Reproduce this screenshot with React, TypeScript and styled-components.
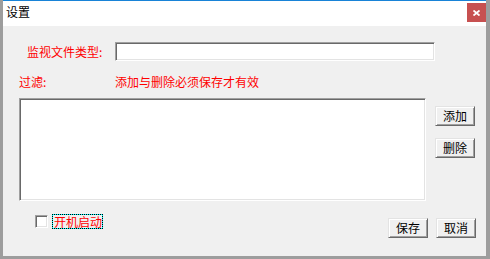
import React from 'react';
import styled, { createGlobalStyle } from 'styled-components';

const GlobalStyle = createGlobalStyle`
  html, body {
    margin: 0;
    padding: 0;
    background: #ffffff;
  }
  * {
    box-sizing: border-box;
  }
`;

export default function App() {
  return (
    <>
      <GlobalStyle />
      <Window>
        <TitleBar>
          <Title>设置</Title>
          <CloseButton>
            <svg width="7" height="6" viewBox="0 0 7 6">
              <path d="M0.5 0.5 L6.5 5.5 M6.5 0.5 L0.5 5.5" stroke="#ffffff" strokeWidth="1.8" />
            </svg>
          </CloseButton>
        </TitleBar>
        <Content>
          <FieldRow>
            <FieldLabel>监视文件类型:</FieldLabel>
            <TextField />
          </FieldRow>
          <FilterRow>
            <FilterLabel>过滤:</FilterLabel>
            <Hint>添加与删除必须保存才有效</Hint>
          </FilterRow>
          <ListRow>
            <ListBox />
            <SideButtons>
              <Button>添加</Button>
              <Button>删除</Button>
            </SideButtons>
          </ListRow>
          <Footer>
            <CheckWrap>
              <CheckBox />
              <CheckLabel>开机启动</CheckLabel>
            </CheckWrap>
            <FooterButtons>
              <Button>保存</Button>
              <Button>取消</Button>
            </FooterButtons>
          </Footer>
        </Content>
      </Window>
    </>
  );
}

const Window = styled.div`
  width: 490px;
  height: 259px;
  display: flex;
  flex-direction: column;
  border-left: 3px solid #9d9d9d;
  border-right: 4px solid #9d9d9d;
  border-bottom: 3px solid #9d9d9d;
  background: #f0f0f0;
  font-family: 'Noto Sans CJK SC', 'Liberation Sans', sans-serif;
  font-size: 12px;
`;

const TitleBar = styled.div`
  height: 26px;
  flex-shrink: 0;
  display: flex;
  align-items: flex-start;
  justify-content: space-between;
  background: #ffffff;
  border-top: 1px solid #1883d7;
`;

const Title = styled.span`
  margin: 4px 0 0 3px;
  line-height: 14px;
  font-size: 12px;
  color: #000000;
`;

const CloseButton = styled.div`
  width: 19px;
  height: 19px;
  margin-top: 2px;
  display: flex;
  align-items: center;
  justify-content: center;
  background: #c75050;
`;

const Content = styled.div`
  flex: 1;
  display: flex;
  flex-direction: column;
  padding: 16px 10px 0 16px;
`;

const FieldRow = styled.div`
  display: flex;
  align-items: center;
  height: 19px;
`;

const FieldLabel = styled.span`
  width: 96px;
  padding-left: 8px;
  color: #ff0000;
  line-height: 14px;
`;

const sunken = `
  background: #ffffff;
  border: 1px solid;
  border-color: #a0a0a0 #ffffff #ffffff #a0a0a0;
  box-shadow: inset 1px 1px 0 #696969, inset -1px -1px 0 #e3e3e3;
`;

const TextField = styled.div`
  width: 320px;
  height: 19px;
  ${sunken}
`;

const FilterRow = styled.div`
  display: flex;
  align-items: center;
  height: 20px;
  margin-top: 11px;
`;

const FilterLabel = styled.span`
  width: 96px;
  color: #ff0000;
  line-height: 14px;
`;

const Hint = styled.span`
  color: #ff0000;
  line-height: 14px;
`;

const ListRow = styled.div`
  display: flex;
  gap: 9px;
  margin-top: 6px;
`;

const ListBox = styled.div`
  width: 407px;
  height: 103px;
  ${sunken}
`;

const SideButtons = styled.div`
  display: flex;
  flex-direction: column;
  gap: 12px;
  padding-top: 8px;
`;

const Button = styled.div`
  width: 40px;
  height: 20px;
  display: flex;
  align-items: center;
  justify-content: center;
  background: #f0f0f0;
  border: 1px solid;
  border-color: #e3e3e3 #696969 #696969 #e3e3e3;
  box-shadow: inset 1px 1px 0 #ffffff, inset -1px -1px 0 #a0a0a0;
  color: #000000;
  line-height: 14px;
`;

const Footer = styled.div`
  display: flex;
  justify-content: space-between;
  align-items: flex-start;
  margin-top: 13px;
`;

const CheckWrap = styled.div`
  display: flex;
  align-items: center;
  gap: 4px;
  padding-left: 16px;
`;

const CheckBox = styled.div`
  width: 13px;
  height: 13px;
  ${sunken}
`;

const CheckLabel = styled.span`
  width: 51px;
  height: 15px;
  display: flex;
  align-items: center;
  padding-left: 1px;
  color: #ff0000;
  line-height: 13px;
  border: 1px dotted #000000;
  background: linear-gradient(#f0f0f0, #f0f0f0) padding-box, #00ffff border-box;
`;

const FooterButtons = styled.div`
  display: flex;
  gap: 8px;
  padding-top: 4px;
`;
